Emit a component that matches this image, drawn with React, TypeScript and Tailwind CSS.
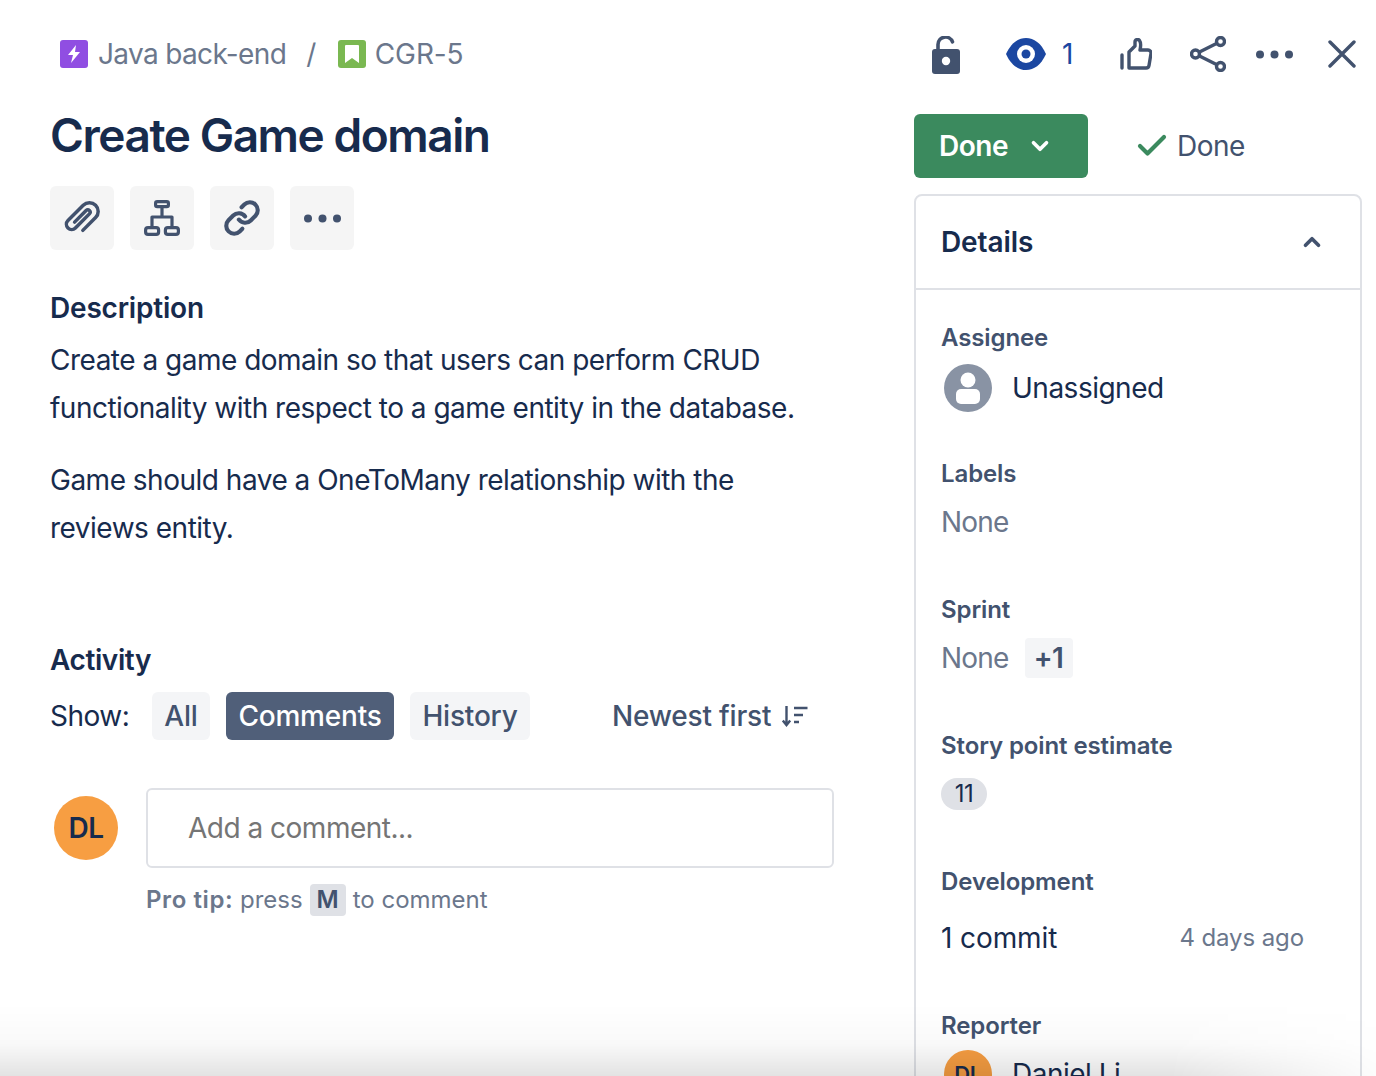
import React from 'react';
import { Link, Check, ChevronDown, ChevronUp } from 'lucide-react';

const slate = '#42526e';

function ToolButton({ children }: { children: React.ReactNode }) {
  return <div className="flex h-16 w-16 items-center justify-center rounded-[6px] bg-[#f5f5f5] text-[#42526e]">{children}</div>;
}

function Dots({ className }: { className?: string }) {
  return (
    <svg className={className} width="37" height="9" viewBox="0 0 37 9" fill={slate}>
      <circle cx="4" cy="4.5" r="4" />
      <circle cx="18.5" cy="4.5" r="4" />
      <circle cx="33" cy="4.5" r="4" />
    </svg>
  );
}

function PaperclipIcon() {
  return (
    <svg width="42" height="42" viewBox="0 0 36 36" fill="none" stroke={slate} strokeWidth="3" strokeLinecap="round">
      <path transform="rotate(45 18 18)" d="M26 25V9.5a7.5 7.5 0 0 0-15 0V28a4.5 4.5 0 0 0 9 0V11a2 2 0 0 0-4 0v14" />
    </svg>
  );
}

function HierarchyIcon() {
  return (
    <svg width="36" height="36" viewBox="0 0 36 36" fill="none" stroke={slate} strokeWidth="3.2" strokeLinejoin="round">
      <rect x="11.6" y="1.6" width="12.8" height="5" rx="1.6" />
      <path d="M18 7v10M8 27V17h20v10" />
      <rect x="1.6" y="27.6" width="13" height="6.8" rx="2.4" />
      <rect x="21.4" y="27.6" width="13" height="6.8" rx="2.4" />
    </svg>
  );
}

function Field({ label, children, className }: { label: string; children: React.ReactNode; className?: string }) {
  return (
    <div className={className}>
      <div className="text-[24px] leading-[32px] font-semibold tracking-[-0.1px] text-[#42526e]">{label}</div>
      {children}
    </div>
  );
}

export default function App() {
  return (
    <div className="relative flex h-[1076px] w-[1376px] overflow-hidden bg-white font-['Inter',sans-serif] tracking-[-0.5px] text-[#172b4d]">
      <div className="w-[914px] shrink-0 pl-[50px] pt-[38px]">
        {/* breadcrumb */}
        <div className="flex h-8 items-center pl-[10px] text-[28px] text-[#6b778c]">
          <span className="flex h-7 w-7 items-center justify-center rounded-[3px] bg-[#904ee2]">
            <svg width="14" height="18" viewBox="0 0 14 18" fill="white"><path d="M9 0 1 10h5l-2 8 9-11H8z" /></svg>
          </span>
          <span className="ml-[10px] tracking-[-0.65px]">Java back-end</span>
          <span className="ml-[20px]">/</span>
          <span className="ml-[22px] flex h-7 w-7 items-center justify-center rounded-[3px] bg-[#7ab851]">
            <svg width="16" height="20" viewBox="0 0 16 20" fill="white"><path d="M1 2a1 1 0 0 1 1-1h12a1 1 0 0 1 1 1v17l-7-5-7 5z" /></svg>
          </span>
          <span className="ml-[9px] tracking-[-0.1px]">CGR-5</span>
        </div>

        <h1 className="mt-[37px] text-[46px] leading-[56px] font-semibold tracking-[-1.45px] text-[#172b4d]">Create Game domain</h1>

        <div className="mt-[23px] flex gap-4">
          <ToolButton><PaperclipIcon /></ToolButton>
          <ToolButton><HierarchyIcon /></ToolButton>
          <ToolButton><Link size={38} strokeWidth={2.6} /></ToolButton>
          <ToolButton><Dots /></ToolButton>
        </div>

        <h2 className="mt-[42px] text-[28px] leading-8 font-semibold tracking-[-0.2px]">Description</h2>
        <div className="mt-[12px] w-[770px] text-[28px] leading-[48px]">
          <p>Create a game domain so that users can perform CRUD functionality with respect to a game entity in the database.</p>
          <p className="mt-6">Game should have a OneToMany relationship with the reviews entity.</p>
        </div>

        <h2 className="mt-[92px] text-[28px] leading-8 font-semibold tracking-[-0.4px]">Activity</h2>
        <div className="mt-[16px] flex h-12 items-center text-[28px]">
          <span className="w-[102px]">Show:</span>
          <span className="flex h-12 w-[58px] items-center justify-center rounded-[6px] bg-[#f4f5f7] font-medium tracking-[-0.2px] text-[#42526e]">All</span>
          <span className="ml-4 flex h-12 w-[168px] items-center justify-center rounded-[6px] bg-[#505f79] font-medium tracking-[-0.2px] text-white">Comments</span>
          <span className="ml-4 flex h-12 w-[120px] items-center justify-center rounded-[6px] bg-[#f4f5f7] font-medium tracking-[-0.2px] text-[#42526e]">History</span>
          <span className="ml-[82px] font-medium tracking-[-0.2px] text-[#42526e]">Newest first</span>
          <svg className="ml-[11px]" width="26" height="24" viewBox="0 0 26 24" fill="none" stroke={slate} strokeWidth="2.4">
            <path d="M4.5 2v19M0.8 16.5 4.5 21l3.7-4.5M12 4h13.5M12 11h9M12 18h5" />
          </svg>
        </div>

        <div className="mt-12 flex">
          <div className="ml-1 mt-2 flex h-16 w-16 items-center justify-center rounded-full bg-[#f79e42] text-[28px] font-semibold text-[#172b4d]">DL</div>
          <div className="ml-7 flex h-20 w-[688px] items-center rounded-[6px] border-2 border-[#dfe1e6] pl-10 text-[28px] text-[#757575]">Add a comment...</div>
        </div>
        <div className="ml-24 mt-4 flex h-8 items-center text-[24px] tracking-normal text-[#6b778c]">
          <span className="w-[87px] font-semibold tracking-[0.6px] whitespace-nowrap">Pro tip:</span>
          <span className="ml-[7px]">press</span>
          <span className="ml-[7px] flex h-8 w-9 items-center justify-center rounded-[4px] bg-[#dfe1e6] font-semibold text-[#42526e]">M</span>
          <span className="ml-[7px]">to comment</span>
        </div>
      </div>

      <div className="w-[448px] shrink-0">
        {/* top actions */}
        <div className="flex h-[114px] items-start">
          <div className="mt-[32px] flex h-[44px] items-center text-[#42526e]">
            <svg className="ml-[18px] mt-[1px]" width="28" height="38" viewBox="0 0 28 38">
              <path d="M6 15V8.5a7.5 7.5 0 0 1 14.5-2.6" fill="none" stroke={slate} strokeWidth="3.6" strokeLinecap="round" />
              <rect x="0" y="13" width="28" height="25" rx="3" fill={slate} />
              <circle cx="14" cy="25" r="4.2" fill="white" />
            </svg>
            <svg className="ml-[46px]" width="40" height="32" viewBox="0 0 40 32">
              <path d="M0 16C5 5 12 0 20 0s15 5 20 16c-5 11-12 16-20 16S5 27 0 16z" fill="#1b47a1" />
              <circle cx="20" cy="16" r="9" fill="white" />
              <circle cx="20" cy="16" r="4.5" fill="#1b47a1" />
            </svg>
            <span className="ml-[16px] w-[14px] text-[28px] tracking-normal text-[#1b47a1]">1</span>
            <svg className="ml-[44px]" width="32" height="32" viewBox="0 0 32 32" fill="none" stroke={slate} strokeWidth="3.4" strokeLinejoin="round" strokeLinecap="round">
              <path d="M2 17v13" />
              <path d="M9 30V14l6-6V4a2.5 2.5 0 0 1 4.5-1.5c1.5 2 1.5 5 .5 9.5h8a3 3 0 0 1 3 3.5l-2 12a3 3 0 0 1-3 2.5z" />
            </svg>
            <svg className="ml-[38px]" width="36" height="36" viewBox="0 0 36 36" fill="none" stroke={slate} strokeWidth="3.4">
              <circle cx="5.5" cy="18" r="4" />
              <circle cx="30.5" cy="5.5" r="4" />
              <circle cx="30.5" cy="30.5" r="4" />
              <path d="m9.5 16 17-8.5M9.5 20l17 8.5" />
            </svg>
            <Dots className="ml-[30px]" />
            <svg className="ml-[35px]" width="28" height="28" viewBox="0 0 28 28" fill="none" stroke={slate} strokeWidth="3.4" strokeLinecap="round">
              <path d="M2 2l24 24M26 2 2 26" />
            </svg>
          </div>
        </div>

        <div className="flex h-16 items-center">
          <div className="flex h-16 w-[174px] items-center rounded-[6px] bg-[#3b8a5e] pl-[25px] text-[28px] font-semibold text-white">
            <span>Done</span>
            <ChevronDown className="ml-[19px]" size={26} strokeWidth={3.4} />
          </div>
          <Check className="ml-[46px] text-[#3b8a5e]" size={36} strokeWidth={2.8} />
          <span className="ml-[7px] text-[28px] text-[#42526e]">Done</span>
        </div>

        {/* details panel */}
        <div className="mt-4 h-[900px] rounded-t-[8px] border-2 border-[#dfe1e6]">
          <div className="flex h-[94px] items-center justify-between border-b-2 border-[#dfe1e6] pl-[25px] pr-[35px]">
            <span className="text-[28px] font-semibold tracking-[-0.1px]">Details</span>
            <ChevronUp size={26} strokeWidth={3.4} className="text-[#42526e]" />
          </div>
          <div className="pl-[25px] pr-[56px] pt-[32px]">
            <Field label="Assignee">
              <div className="mt-[10px] flex h-12 items-center text-[28px]">
                <svg className="ml-[3px]" width="48" height="48" viewBox="0 0 48 48">
                  <circle cx="24" cy="24" r="24" fill="#8993a4" />
                  <circle cx="24" cy="16" r="7.5" fill="white" />
                  <rect x="12" y="25" width="24" height="15" rx="5" fill="white" />
                </svg>
                <span className="ml-[20px]">Unassigned</span>
              </div>
            </Field>
            <Field label="Labels" className="mt-[46px]">
              <div className="mt-[8px] h-12 text-[28px] leading-[48px] tracking-[-0.8px] text-[#6b778c]">None</div>
            </Field>
            <Field label="Sprint" className="mt-[48px]">
              <div className="mt-[8px] flex h-12 items-center text-[28px] text-[#6b778c]">
                <span className="tracking-[-0.8px]">None</span>
                <span className="ml-[16px] flex h-10 w-12 items-center justify-center rounded-[4px] bg-[#f4f5f7] font-semibold text-[#42526e]">+1</span>
              </div>
            </Field>
            <Field label="Story point estimate" className="mt-[48px]">
              <div className="mt-[8px] flex h-12 items-center">
                <span className="flex h-8 w-[46px] items-center justify-center rounded-full bg-[#dfe1e6] text-[24px] text-[#172b4d]">11</span>
              </div>
            </Field>
            <Field label="Development" className="mt-[48px]">
              <div className="mt-[16px] flex h-12 items-center justify-between text-[28px]">
                <span className="tracking-[-0.1px]">1 commit</span>
                <span className="text-[24px] tracking-[-0.1px] text-[#6b778c]">4 days ago</span>
              </div>
            </Field>
            <Field label="Reporter" className="mt-[48px]">
              <div className="mt-[8px] flex items-center text-[28px]">
                <div className="ml-[3px] flex h-12 w-12 items-center justify-center rounded-full bg-[#f79e42] text-[22px] font-semibold">DL</div>
                <span className="ml-[20px]">Daniel Li</span>
              </div>
            </Field>
          </div>
        </div>
      </div>

      {/* bottom shadow, fades out toward the right edge */}
      <div className="pointer-events-none absolute inset-x-0 bottom-0 h-[72px] bg-[linear-gradient(to_bottom,rgba(0,0,0,0)_0%,rgba(0,0,0,0.025)_55%,rgba(0,0,0,0.11)_100%)] [mask-image:linear-gradient(to_right,black_85%,rgba(0,0,0,0.12)_100%)]" />
    </div>
  );
}
